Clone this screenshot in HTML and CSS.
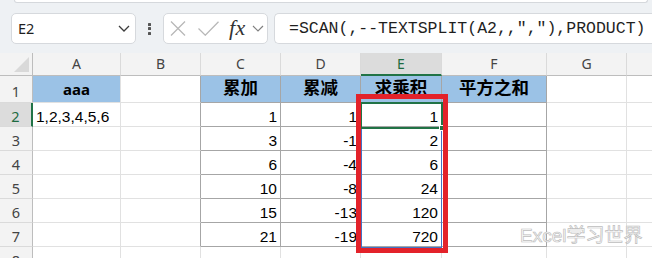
FILE: index.html
```html
<!DOCTYPE html>
<html><head><meta charset="utf-8"><link rel="stylesheet" href="styles.css"></head>
<body>
<div class="top">
  <div class="ribbon-edge"></div>
  <div class="bar">
    <div class="box namebox"><span class="ref">E2</span><svg class="chev" width="12" height="7" viewBox="0 0 12 7"><path d="M1 1l5 5 5-5" fill="none" stroke="#3c3c3c" stroke-width="1.3"/></svg></div>
    <div class="grip"><i></i><i></i><i></i></div>
    <div class="box fxbox">
      <svg class="ix" width="16" height="15" viewBox="0 0 16 15"><path d="M1 .5L15 14.5M15 .5L1 14.5" stroke="#b8b8b8" stroke-width="1.3" fill="none"/></svg>
      <svg class="ic" width="21" height="15" viewBox="0 0 21 15"><path d="M.5 7.5L7.3 14.2L20.5 .8" fill="none" stroke="#b8b8b8" stroke-width="1.3"/></svg>
      <span class="fx">fx</span>
      <svg class="ichev" width="12" height="7" viewBox="0 0 12 7"><path d="M1 1l5 5 5-5" fill="none" stroke="#808080" stroke-width="1.2"/></svg>
    </div>
    <div class="box formula">=SCAN(,--TEXTSPLIT(A2,,","),PRODUCT)</div>
  </div>
</div>
<div class="sheet">
  <div class="grid">
    <div class="c h corner"><svg width="16" height="16" viewBox="0 0 16 16"><path d="M15 0V15H0Z" fill="#d9d9d9"/></svg></div>
    <div class="c h">A</div><div class="c h">B</div><div class="c h">C</div><div class="c h">D</div><div class="c h hs">E</div><div class="c h">F</div><div class="c h">G</div><div class="c h last"></div>

    <div class="c rh">1</div>
    <div class="c blue aaa">aaa</div><div class="c tb"></div>
    <div class="c blue t hd">累加</div><div class="c blue t hd">累减</div><div class="c blue t hd">求乘积</div><div class="c blue t hd">平方之和</div>
    <div class="c"></div><div class="c last"></div>

    <div class="c rh rs">2</div>
    <div class="c txt">1,2,3,4,5,6</div><div class="c tb"></div>
    <div class="c t n">1</div><div class="c t n">1</div><div class="c t n">1</div><div class="c t"></div>
    <div class="c"></div><div class="c last"></div>

    <div class="c rh">3</div>
    <div class="c"></div><div class="c tb"></div>
    <div class="c t n">3</div><div class="c t n">-1</div><div class="c t n">2</div><div class="c t"></div>
    <div class="c"></div><div class="c last"></div>

    <div class="c rh">4</div>
    <div class="c"></div><div class="c tb"></div>
    <div class="c t n">6</div><div class="c t n">-4</div><div class="c t n">6</div><div class="c t"></div>
    <div class="c"></div><div class="c last"></div>

    <div class="c rh">5</div>
    <div class="c"></div><div class="c tb"></div>
    <div class="c t n">10</div><div class="c t n">-8</div><div class="c t n">24</div><div class="c t"></div>
    <div class="c"></div><div class="c last"></div>

    <div class="c rh">6</div>
    <div class="c"></div><div class="c tb"></div>
    <div class="c t n">15</div><div class="c t n">-13</div><div class="c t n">120</div><div class="c t"></div>
    <div class="c"></div><div class="c last"></div>

    <div class="c rh">7</div>
    <div class="c"></div><div class="c tb"></div>
    <div class="c t n">21</div><div class="c t n">-19</div><div class="c t n">720</div><div class="c t"></div>
    <div class="c"></div><div class="c last"></div>

    <div class="c rh">8</div>
    <div class="c"></div><div class="c"></div>
    <div class="c"></div><div class="c"></div><div class="c"></div><div class="c"></div>
    <div class="c"></div><div class="c last"></div>
  </div>
  <div class="spill"></div>
  <div class="selbox"></div>
  <div class="handle"></div>
  <div class="redbox"></div>
  <div class="wm">Excel学习世界</div>
</div>
</body></html>
```
FILE: styles.css
```css
*{box-sizing:border-box;margin:0;padding:0}
html,body{width:652px;height:258px;overflow:hidden;background:#fff}
body{font-family:"Noto Sans",sans-serif}

.top{height:53px;background:#eef1f4;overflow:hidden}
.ribbon-edge{height:3px;margin:0 4px 0 14px;background:#fff;border:1px solid #d5d8dc;border-top:0;border-radius:0 0 6px 6px}
.bar{display:flex;align-items:center;height:31px;margin-top:10px;padding-left:11px}
.box{flex:none;height:31px;background:#fff;border:1px solid #d6d9dd;border-radius:5px;display:flex;align-items:center}
.namebox{width:125px;padding:0 5px 0 6px;justify-content:space-between}
.ref{font-size:14.5px;color:#1f1f1f;line-height:1}
.grip{flex:none;width:27px;display:flex;flex-direction:column;align-items:center;gap:1.5px}
.grip i{display:block;width:3px;height:3px;background:#555;border-radius:.5px}
.fxbox{width:105px;padding-left:6px}
.ic{margin-left:12px}
.fx{margin-left:10px;font-family:"Liberation Serif",serif;font-style:italic;font-size:22px;line-height:1;color:#333;letter-spacing:.5px;position:relative;top:-1px}
.ichev{margin-left:6px}
.formula{width:400px;margin-left:6px;padding-left:14px;border-right:0;border-radius:5px 0 0 5px;font-family:"Liberation Mono",monospace;font-size:16.5px;color:#1f1f1f;white-space:nowrap}

.sheet{position:relative;height:205px;overflow:hidden}
.grid{display:grid;grid-template-columns:33px 88px 80px 80px 80px 81px 105px 80px 1fr;grid-template-rows:23px 27px repeat(7,24px)}
.c{border-right:1px solid #e1e1e1;border-bottom:1px solid #e1e1e1;display:flex;align-items:flex-end;font-family:"Liberation Sans",sans-serif;font-size:15.5px;line-height:18px;color:#000;white-space:nowrap;overflow:hidden}
.c.last{border-right:0}
.h{background:#f3f3f3;border-right-color:#dadada;border-bottom-color:#bdbdbd;align-items:center;justify-content:center;font-family:"Noto Sans",sans-serif;font-size:14px;line-height:1;color:#444}
.corner{border-right-color:#bdbdbd;align-items:flex-end;justify-content:flex-end;padding:0 2px 2px 0}
.hs{background:#dcdcdc;border-bottom:2px solid #217346;color:#1e6b41}
.rh{background:#f3f3f3;border-right-color:#bdbdbd;border-bottom-color:#dadada;align-items:center;justify-content:center;font-family:"Noto Sans",sans-serif;font-size:14.5px;line-height:1;color:#444;padding-top:4px}
.rs{background:#dcdcdc;border-right:2px solid #217346;color:#1e6b41}
.blue{background:#9bc2e6}
.t{border-right-color:#a6a6a6;border-bottom-color:#a6a6a6}
.tb{border-right-color:#a6a6a6}
.n{justify-content:flex-end;padding-right:3px}
.txt{padding-left:3px}
.hd{justify-content:center;align-items:center;overflow:visible;font-family:"Noto Sans CJK SC",sans-serif;font-weight:700;font-size:17.5px;line-height:20px;padding-bottom:4px}
.aaa{justify-content:center;font-family:"Noto Sans",sans-serif;font-weight:700;font-size:15px;padding-bottom:4px}

.spill{position:absolute;left:361px;top:50px;width:81px;height:145px;border:1px solid #4472c4}
.selbox{position:absolute;left:360px;top:49px;width:83px;height:27px;border:2px solid #217346}
.handle{position:absolute;left:439px;top:72px;width:6px;height:6px;background:#217346;border:1px solid #fff}
.redbox{position:absolute;left:356px;top:41px;width:92px;height:159px;border:5px solid #e3222a}
.wm{position:absolute;left:520px;top:173px;font-family:"Liberation Sans","Noto Sans CJK SC",sans-serif;font-size:19px;line-height:1;color:#fff;-webkit-text-stroke:.7px #bdbdbd;white-space:nowrap}
```
